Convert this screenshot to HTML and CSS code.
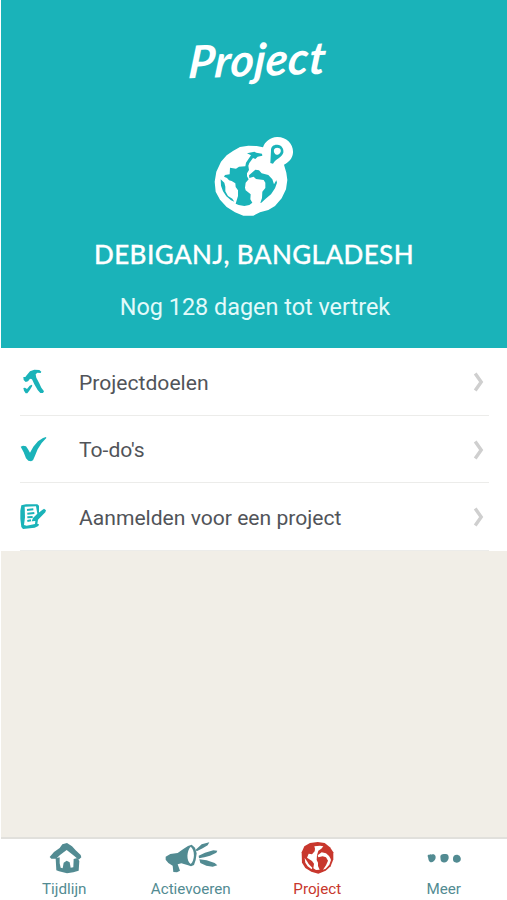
FILE: index.html
```html
<!DOCTYPE html>
<html lang="nl">
<head>
    <meta charset="UTF-8">
    <title>Project</title>
    <link rel="stylesheet" href="styles.css">
</head>
<body>

<div id="container">
    <div class="header">
        <h1 class="title">Project</h1>
        <svg class="globe" viewBox="-3 0 300 285">
            <path fill="#fff" d="M85 62L105 51 130 47 155 48 174 52C180 35 195 22 216 21C244 20 266 42 264 68C262 86 252 96 237 104L244 128 247 150 243 178 230 205 210 228 190 240 165 247 145 257 115 257 90 247 65 231 45 209 32 185 29 155 34 125 48 95 65 76Z"/>
            <g fill="#1ab3b9">
                <path d="M126 70L148 65 154 68 171 71 172 77 158 80 151 87 144 84 133 99 130 107 132 120 126 130 126 139 131 148 122 158 120 173 122 181 137 193 136 208 142 218 133 225 118 228 101 225 92 221 99 198 99 181 92 171 91 160 80 153 72 151 66 144 57 140 60 135 74 133 75 113 93 116 102 110 121 109 123 98 131 86 138 76Z"/>
                <path d="M47 148L58 158 61 170 61 184 69 198 82 206 88 215 78 211 64 199 54 184 48 167Z"/>
                <path d="M132 136L151 119 162 121 170 130 190 135 202 148 207 163 214 151 216 158 210 175 198 193 182 206 169 218 166 219 171 204 172 185 181 174 181 158 176 150 153 147 146 140 133 144Z"/>
                <path fill-rule="evenodd" d="M198 62C197 49 207 43 217 44C230 45 237 56 235 68C231 82 212 86 204 101L196 99ZM207 59C205 68 211 75 219 74C229 70 230 59 223 55C217 51 209 53 207 59Z"/>
            </g>
        </svg>
        <h2 class="place">DEBIGANJ, BANGLADESH</h2>
        <p class="days">Nog 128 dagen tot vertrek</p>
    </div>

    <ul class="list">
        <li>
            <svg class="icon" viewBox="0 -3 150 150">
                <path d="M40 51L46 51 50 46 60 34 73 29 88 30 94 35 92 39 82 38 77 43 79 53 87 68 94 83 102 94 99 99 91 99 83 90 73 73 66 58 60 56 54 64 47 66 41 60Z"/>
                <path d="M40 84L45 83 51 87 59 77 65 74 67 77 60 89 52 100 47 100 42 92Z"/>
            </svg>
            <span class="text">Projectdoelen</span>
            <svg class="arrow" viewBox="0 0 12 20"><path d="M2.2 1.5L8.2 10L2.2 18.5"/></svg>
        </li>
        <li>
            <svg class="icon" viewBox="0 2 150 150">
                <path d="M32 64L39 61 48 63 54 72 60 82 70 64 84 48 99 38 108 35 109 38 95 53 83 72 75 91 69 105 63 108 55 106 48 99 41 81Z"/>
            </svg>
            <span class="text">To-do's</span>
            <svg class="arrow" viewBox="0 0 12 20"><path d="M2.2 1.5L8.2 10L2.2 18.5"/></svg>
        </li>
        <li>
            <svg class="icon" viewBox="0 5 150 150">
                <path fill-rule="evenodd" d="M34 39L48 36 82 36 87 40 87 61 102 49 108 54 106 60 84 82 82 94 87 96 85 101 74 106 39 110 34 104 31 80 31 55ZM44 43L78 42 82 64 69 77 65 87 76 86 75 95 50 100 42 98 45 75Z"/>
                <path class="lines" d="M51 53L70 51M52 64L73 62M52 75L68 74M52 86L63 84"/>
                <path d="M70 80L86 63 98 52 105 55 96 66 78 83 67 87Z"/>
            </svg>
            <span class="text">Aanmelden voor een project</span>
            <svg class="arrow" viewBox="0 0 12 20"><path d="M2.2 1.5L8.2 10L2.2 18.5"/></svg>
        </li>
    </ul>

    <div class="tabs">
        <a class="tab">
            <svg viewBox="-8 0 210 114">
                <path d="M54 63L67 48 84 36 92 25 106 21 121 31 132 43 147 57 149 64 141 71 127 59 105 42 85 57 73 68 59 68Z"/>
                <path d="M72 67L84 64 84 82 87 95 93 97 96 80 105 74 114 79 117 95 125 94 126 69 137 66 143 75 141 104 125 109 106 112 82 106 74 103Z"/>
            </svg>
            <span>Tijdlijn</span>
        </a>
        <a class="tab">
            <svg viewBox="2 3 210 114">
                <path d="M31 65L45 57 67 54 84 42 98 33 109 29 119 38 124 55 121 75 116 90 107 94 96 90 78 85 67 88 74 107 65 112 54 111 52 92 39 84 31 74Z"/>
                <path fill="#fff" d="M106 35C119 44 119 76 106 87C92 76 94 48 106 35Z"/>
                <path d="M121 44L139 28 162 22 157 31 142 40 124 49ZM130 62L149 53 174 46 186 47 183 53 164 62 147 67 131 70ZM132 73L154 76 178 84 186 91 172 95 153 92 135 84Z"/>
            </svg>
            <span>Actievoeren</span>
        </a>
        <a class="tab on">
            <svg viewBox="-2 0 210 114">
                <path d="M57 49L65 31 82 21 105 18 126 21 142 34 152 49 152 70 144 91 129 104 107 113 86 107 68 96 58 80Z"/>
                <g fill="#fff">
                    <path d="M95 31L112 29 122 31 116 38 107 44 103 58 102 72 106 80 106 90 111 101 100 102 92 97 94 83 88 75 80 70 73 65 78 53 88 55 96 46 97 38Z"/>
                    <path d="M66 66L73 76 78 84 89 95 87 100 75 91 68 80Z"/>
                    <path d="M105 58L117 49 130 52 139 60 143 67 145 72 140 86 129 98 121 101 130 88 136 74 130 64 120 61 107 64Z"/>
                </g>
            </svg>
            <span>Project</span>
        </a>
        <a class="tab">
            <svg viewBox="0 0 210 114">
                <path d="M56 61C55 54 65 57 70 55C78 53 82 61 79 69C76 77 68 81 62 77C57 73 59 67 56 61Z"/>
                <path d="M94 63C93 55 101 53 108 54C117 53 120 59 119 67C117 77 109 81 102 79C94 77 95 69 94 63Z"/>
                <path d="M132 69C131 60 139 55 147 57C154 59 157 67 155 73C152 80 143 81 138 79C133 77 132 73 132 69Z"/>
            </svg>
            <span>Meer</span>
        </a>
    </div>
</div>

</body>
</html>
```
FILE: styles.css
```css
body,h1,h2,p,ul,li{margin:0;padding:0;}
body {
    font-family: Roboto, "Liberation Sans", sans-serif;
    background: #fff;
}
#container {
    display: flex;
    flex-direction: column;
    width: 506px;
    height: 900px;
    margin-left: 1px;
    overflow: hidden;
    background: #f1eee7;
}
.header {
    display: flex;
    flex-direction: column;
    align-items: center;
    height: 348px;
    flex: none;
    color: #fff;
    background: #1ab3b9;
}
.title {
    height: 60px;
    margin-top: 29px;
    padding-left: 7px;
    font: italic 700 45px/60px Lato, sans-serif;
    letter-spacing: 0.4px;
    transform: rotate(-2deg) skewX(-7deg);
}
.globe {
    width: 100px;
    height: 95px;
    margin-top: 41px;
}
.place {
    margin-top: 9px;
    font: 500 26px/40px Lato, sans-serif;
    letter-spacing: 0.4px;
    white-space: nowrap;
    -webkit-text-stroke: 0.3px #fff;
}
.days {
    margin-top: 16px;
    padding-left: 2px;
    font-size: 23.4px;
    line-height: 34px;
    color: #e3fafa;
}
.list {
    list-style: none;
    height: 203px;
    flex: none;
    background: #fff;
}
.list li {
    display: flex;
    align-items: center;
    height: 66.6px;
    margin: 0 18px 0 19px;
    border-bottom: 1px solid #ececea;
}
.icon {
    width: 50px;
    height: 50px;
    margin: 5px 19px 0 -10px;
    fill: #1ab3b9;
}
.icon .lines {
    fill: none;
    stroke: #1ab3b9;
    stroke-width: 6;
}
.text {
    flex: 1;
    padding-top: 2px;
    font-size: 21.1px;
    color: #515459;
}
.arrow {
    width: 12px;
    height: 20px;
    margin: 2px 4px 0 0;
    fill: none;
    stroke: #cfcfcf;
    stroke-width: 3.4;
}
.tabs {
    display: flex;
    height: 61px;
    margin-top: auto;
    border-top: 2px solid #e1e0dc;
    background: #fff;
}
.tab {
    display: flex;
    flex-direction: column;
    align-items: center;
    flex: 1;
    font-size: 15.2px;
    line-height: 20px;
    color: #528b92;
    fill: #528b92;
}
.tab svg {
    width: 70px;
    height: 38px;
    margin: -3px 0 5px;
}
.tab.on {
    color: #c8372d;
    fill: #c8372d;
}
```
